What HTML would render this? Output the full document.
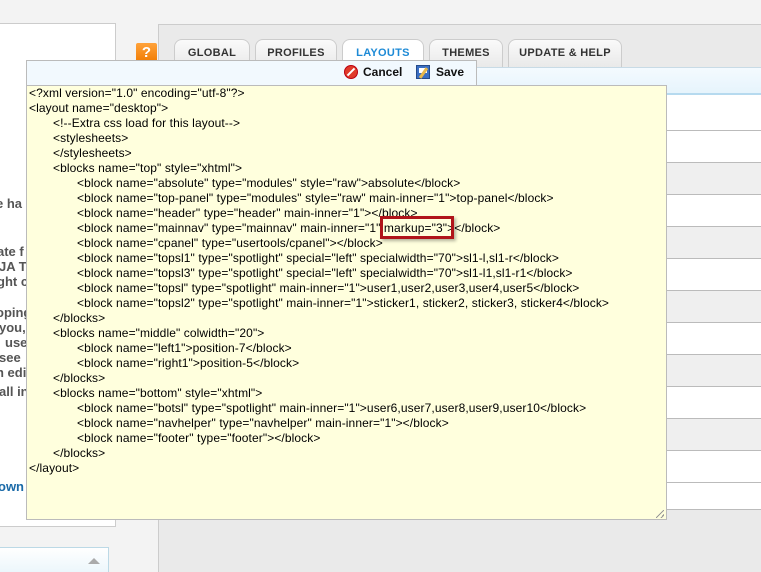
<!DOCTYPE html>
<html style="overflow:hidden;height:572px"><head><meta charset="utf-8"><style>
*{margin:0;padding:0;box-sizing:border-box}
body{width:761px;height:572px;overflow:hidden;background:#f3f3f3;font-family:"Liberation Sans",Arial,sans-serif;position:relative}
.abs{position:absolute}
.left{left:-1px;top:23px;width:117px;height:504px;background:#fff;border:1px solid #ccc;overflow:hidden}
.left div{position:absolute;font-weight:bold;font-size:13px;color:#555;white-space:nowrap}
.panel{left:158px;top:24px;width:610px;height:548px;background:#eaeaea;border-left:1px solid #ccc;border-top:1px solid #ccc}
.tab{top:39px;height:30px;border:1px solid #ccc;border-bottom:none;border-radius:8px 8px 0 0;background:linear-gradient(#fafafa,#e8e8e8);font-size:11px;font-weight:bold;color:#333;text-align:center;line-height:26px;letter-spacing:.3px}
.row{left:666px;width:100px;border-bottom:1px solid #bbb}
.code{left:26px;top:85px;width:641px;height:435px;background:#ffffdd;border:1px solid #bbb;font-size:12px;line-height:15px;color:#000;white-space:pre;padding:0 0 0 2px;letter-spacing:0.1px;tab-size:24px;-moz-tab-size:24px}
</style></head><body>
<div class="abs left">
<div style="top:172px;left:-4px">e ha</div>
<div style="top:220px;left:-3px">ate f</div>
<div style="top:235px;left:-1px">JA T</div>
<div style="top:250px;left:-3px">ght c</div>
<div style="top:281px;left:-4px">oping</div>
<div style="top:296px;left:-1px">you,</div>
<div style="top:311px;left:5px">use</div>
<div style="top:326px;left:-1px">see</div>
<div style="top:341px;left:-4px">n edi</div>
<div style="top:360px;left:-1px">all in</div>
<div style="top:455px;left:-2px;color:#1a6aa8">own</div>
</div>
<div class="abs" style="left:-1px;top:547px;width:110px;height:30px;border:1px solid #bcd9e6;background:linear-gradient(#fff,#e9f5fb)"><div class="abs" style="right:8px;top:10px;width:0;height:0;border-left:6px solid transparent;border-right:6px solid transparent;border-bottom:6px solid #aaa"></div></div>
<div class="abs panel"></div>
<div class="abs" style="left:136px;top:43px;width:21px;height:20px;background:linear-gradient(#ffa23a,#f07a00);color:#fff;font-weight:bold;font-size:15px;text-align:center;line-height:20px;border-radius:2px">?</div>
<div class="abs tab" style="left:174px;width:76px">GLOBAL</div>
<div class="abs tab" style="left:255px;width:82px">PROFILES</div>
<div class="abs tab" style="left:342px;width:82px;color:#1d8ad6;background:#fff">LAYOUTS</div>
<div class="abs tab" style="left:429px;width:74px">THEMES</div>
<div class="abs tab" style="left:508px;width:114px">UPDATE &amp; HELP</div>
<div class="abs" style="left:26px;top:67px;width:740px;height:28px;background:linear-gradient(#f4faff,#e6f4fc);border-top:1px solid #c8dbe6;border-bottom:2px solid #b6daef"></div>
<div class="abs row" style="top:95px;height:36px;background:#fff"></div>
<div class="abs row" style="top:131px;height:32px;background:#fff"></div>
<div class="abs row" style="top:163px;height:32px;background:#efefef"></div>
<div class="abs row" style="top:195px;height:32px;background:#fff"></div>
<div class="abs row" style="top:227px;height:32px;background:#efefef"></div>
<div class="abs row" style="top:259px;height:32px;background:#fff"></div>
<div class="abs row" style="top:291px;height:32px;background:#efefef"></div>
<div class="abs row" style="top:323px;height:32px;background:#fff"></div>
<div class="abs row" style="top:355px;height:32px;background:#efefef"></div>
<div class="abs row" style="top:387px;height:32px;background:#fff"></div>
<div class="abs row" style="top:419px;height:32px;background:#efefef"></div>
<div class="abs row" style="top:451px;height:32px;background:#fff"></div>
<div class="abs row" style="top:483px;height:27px;background:#fff"></div>
<div class="abs" style="left:26px;top:60px;width:451px;height:26px;background:#f2f9fe;border:1px solid #bbb;border-bottom:none"></div>
<div class="abs" style="left:344px;top:65px;width:14px;height:14px;border-radius:50%;background:#e03a2a;border:1px solid #b01"><div class="abs" style="left:1px;top:5px;width:10px;height:2px;background:#fff;transform:rotate(-45deg)"></div></div>
<div class="abs" style="left:363px;top:65px;font-size:12px;font-weight:bold;color:#111">Cancel</div>
<div class="abs" style="left:416px;top:65px;width:14px;height:14px;background:#3a6fc4;border:1px solid #244a8a"><div class="abs" style="left:2px;top:2px;width:8px;height:5px;background:#fff"></div><div class="abs" style="left:5px;top:1px;width:3px;height:12px;background:#e8b84a;transform:rotate(35deg)"></div></div>
<div class="abs" style="left:436px;top:65px;font-size:12px;font-weight:bold;color:#111">Save</div>
<div class="abs code">&lt;?xml version="1.0" encoding="utf-8"?&gt;
&lt;layout name="desktop"&gt;
	&lt;!--Extra css load for this layout--&gt;
	&lt;stylesheets&gt;
	&lt;/stylesheets&gt;
	&lt;blocks name="top" style="xhtml"&gt;
		&lt;block name="absolute" type="modules" style="raw"&gt;absolute&lt;/block&gt;
		&lt;block name="top-panel" type="modules" style="raw" main-inner="1"&gt;top-panel&lt;/block&gt;
		&lt;block name="header" type="header" main-inner="1"&gt;&lt;/block&gt;
		&lt;block name="mainnav" type="mainnav" main-inner="1" markup="3"&gt;&lt;/block&gt;
		&lt;block name="cpanel" type="usertools/cpanel"&gt;&lt;/block&gt;
		&lt;block name="topsl1" type="spotlight" special="left" specialwidth="70"&gt;sl1-l,sl1-r&lt;/block&gt;
		&lt;block name="topsl3" type="spotlight" special="left" specialwidth="70"&gt;sl1-l1,sl1-r1&lt;/block&gt;
		&lt;block name="topsl" type="spotlight" main-inner="1"&gt;user1,user2,user3,user4,user5&lt;/block&gt;
		&lt;block name="topsl2" type="spotlight" main-inner="1"&gt;sticker1, sticker2, sticker3, sticker4&lt;/block&gt;
	&lt;/blocks&gt;
	&lt;blocks name="middle" colwidth="20"&gt;
		&lt;block name="left1"&gt;position-7&lt;/block&gt;
		&lt;block name="right1"&gt;position-5&lt;/block&gt;
	&lt;/blocks&gt;
	&lt;blocks name="bottom" style="xhtml"&gt;
		&lt;block name="botsl" type="spotlight" main-inner="1"&gt;user6,user7,user8,user9,user10&lt;/block&gt;
		&lt;block name="navhelper" type="navhelper" main-inner="1"&gt;&lt;/block&gt;
		&lt;block name="footer" type="footer"&gt;&lt;/block&gt;
	&lt;/blocks&gt;
&lt;/layout&gt;</div>
<div class="abs" style="left:380px;top:216px;width:74px;height:23px;border:3px solid #b0141a;box-shadow:2px 2px 3px rgba(0,0,0,.3)"></div>
<div class="abs" style="left:656px;top:510px;width:8px;height:8px;background:linear-gradient(135deg,transparent 45%,#999 45%,#999 55%,transparent 55%,transparent 75%,#999 75%,#999 85%,transparent 85%)"></div>
</body></html>
